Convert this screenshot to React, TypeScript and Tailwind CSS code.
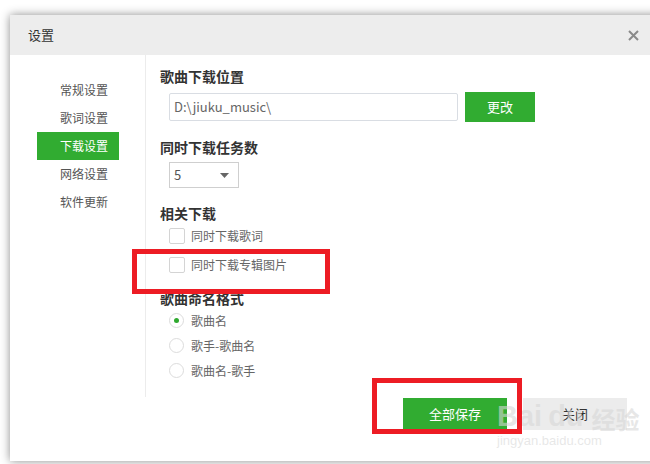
const font = { fontFamily: '"Noto Sans CJK SC", "Noto Sans", sans-serif' }
const latin = { fontFamily: '"Liberation Sans", sans-serif' }

const navItems = ['常规设置', '歌词设置', '下载设置', '网络设置', '软件更新']

function SectionTitle({ children, className }: { children: string; className: string }) {
  return (
    <p className={`h-[20px] text-[14px] leading-[20px] font-bold text-[#333] ${className}`}>{children}</p>
  )
}

function CheckRow({ label, className }: { label: string; className: string }) {
  return (
    <div className={`flex h-[25px] items-center pl-[9px] ${className}`}>
      <span className="h-[16px] w-[16px] rounded-[2px] border border-[#d4d4d4] bg-white" />
      <span className="ml-[6px] text-[12px] text-[#666]">{label}</span>
    </div>
  )
}

function RadioRow({ label, checked }: { label: string; checked?: boolean }) {
  return (
    <div className="flex h-[25px] items-center pl-[9px]">
      <span className="flex h-[15px] w-[15px] items-center justify-center rounded-full border border-[#dcdcdc] bg-white">
        {checked && <span className="h-[5px] w-[5px] rounded-full bg-[#2fa92f]" />}
      </span>
      <span className="ml-[7px] text-[12px] text-[#666]">{label}</span>
    </div>
  )
}

export default function App() {
  return (
    <div className="relative h-[464px] w-[650px] overflow-hidden bg-white pl-[10px] pt-[15px]" style={font}>
      <div className="flex h-[446px] w-[660px] flex-col bg-white shadow-[0_0_9px_rgba(0,0,0,0.45)]">
        {/* title bar */}
        <div className="flex h-[40px] items-center bg-[#ededed] pl-[18px] pr-[31px]">
          <span className="text-[13px] text-[#333]">设置</span>
          <svg className="ml-auto" width="11" height="11" viewBox="0 0 11 11">
            <path d="M1 1L10 10M10 1L1 10" stroke="#8a8a8a" strokeWidth="2" />
          </svg>
        </div>

        {/* body */}
        <div className="flex h-[342px]">
          <div className="w-[136px] border-r border-[#ececec] pt-[21px]">
            {navItems.map((item) => (
              <div
                key={item}
                className={`ml-[27px] flex h-[28px] w-[82px] items-center pl-[23px] text-[12px] ${
                  item === '下载设置' ? 'bg-[#31ac31] text-white' : 'text-[#555]'
                }`}
              >
                {item}
              </div>
            ))}
          </div>

          <div className="flex-1 pl-[14px]">
            <SectionTitle className="mt-[11px]">歌曲下载位置</SectionTitle>
            <div className="mt-[6px] flex h-[30px] items-center pl-[9px]">
              <div className="flex h-[28px] w-[289px] items-center rounded-[2px] border border-[#d9dde3] pl-[4px] text-[13px] text-[#666]">
                {'D:\\jiuku_music\\'}
              </div>
              <div className="ml-[7px] flex h-[30px] w-[70px] items-center justify-center bg-[#31ac31] text-[13px] text-white">
                更改
              </div>
            </div>

            <SectionTitle className="mt-[15px]">同时下载任务数</SectionTitle>
            <div className="ml-[9px] mt-[5px] flex h-[26px] w-[70px] items-center border border-[#cfcfcf] pl-[4px] pr-[9px] text-[13px] text-[#555]">
              5
              <svg className="ml-auto" width="9" height="5" viewBox="0 0 9 5">
                <path d="M0 0H9L4.5 5Z" fill="#666" />
              </svg>
            </div>

            <SectionTitle className="mt-[15px]">相关下载</SectionTitle>
            <CheckRow label="同时下载歌词" className="" />
            <CheckRow label="同时下载专辑图片" className="mt-[4px]" />

            <SectionTitle className="mt-[11px]">歌曲命名格式</SectionTitle>
            <RadioRow label="歌曲名" checked />
            <RadioRow label="歌手-歌曲名" />
            <RadioRow label="歌曲名-歌手" />
          </div>
        </div>

        {/* footer */}
        <div className="flex gap-[16px] pl-[393px] pt-[1px]">
          <div className="flex h-[32px] w-[104px] items-center justify-center bg-[#31ac31] text-[13px] text-white">
            全部保存
          </div>
          <div className="flex h-[32px] w-[104px] items-center justify-center bg-[#ececec] text-[13px] text-[#333]">
            关闭
          </div>
        </div>
      </div>

      {/* watermark */}
      <div className="pointer-events-none absolute left-[497px] top-[402px] flex flex-col text-[rgba(215,215,215,0.6)]">
        <div className="flex items-end leading-none">
          <span className="text-[29px] font-bold" style={latin}>Bai</span>
          <span className="ml-[6px] text-[29px] font-bold" style={latin}>du</span>
          <span className="ml-[8px] text-[24px] font-bold">经验</span>
        </div>
        <span className="mt-[3px] text-[13px] leading-none" style={latin}>
          jingyan.baidu.com
        </span>
      </div>

      {/* red annotation boxes */}
      <div className="pointer-events-none absolute left-[132px] top-[249px] h-[45px] w-[198px] border-[5px] border-[#ed1c24]" />
      <div className="pointer-events-none absolute left-[372px] top-[378px] h-[56px] w-[150px] border-[5px] border-[#ed1c24]" />
    </div>
  )
}
